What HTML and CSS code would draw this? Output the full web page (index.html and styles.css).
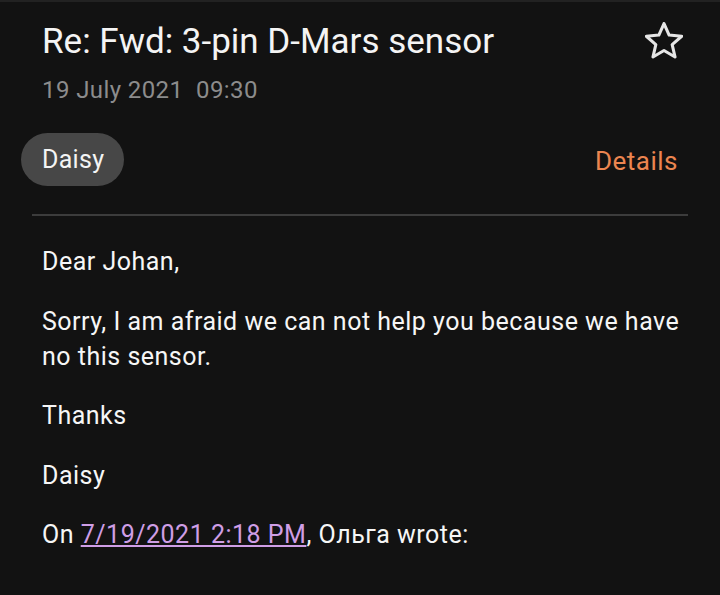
FILE: index.html
```
<!DOCTYPE html>
<html lang="en">
<head>
<meta charset="utf-8">
<link rel="stylesheet" href="styles.css">
</head>
<body>
<div class="screen">
  <header class="head">
    <div class="head-text">
      <h1 class="subject">Re: Fwd: 3-pin D-Mars sensor</h1>
      <div class="date">19 July 2021&nbsp;&nbsp;09:30</div>
    </div>
    <svg class="star" viewBox="2 2 20 20" width="38" height="38" aria-hidden="true">
      <path d="M12 2.8l2.7 6.1 6.6.6-5 4.4 1.5 6.5L12 17l-5.8 3.4 1.5-6.5-5-4.4 6.6-.6z" fill="none" stroke="#e6e6e6" stroke-width="1.6" stroke-linejoin="round"/>
    </svg>
  </header>
  <div class="sender-row">
    <span class="chip">Daisy</span>
    <span class="details">Details</span>
  </div>
  <hr class="divider">
  <div class="body">
    <p>Dear Johan,</p>
    <p>Sorry, I am afraid we can not help you because we have no this sensor.</p>
    <p>Thanks</p>
    <p>Daisy</p>
    <p>On <a class="link" href="#">7/19/2021 2:18 PM</a>, Ольга wrote:</p>
  </div>
</div>
</body>
</html>
```
FILE: styles.css
```
html, body {
  margin: 0;
  padding: 0;
  background: #121212;
}
.screen {
  width: 720px;
  height: 595px;
  box-sizing: border-box;
  border-top: 2px solid #222222;
  background: #121212;
  font-family: Roboto, "Noto Sans", sans-serif;
  color: #f2f2f2;
  overflow: hidden;
}
.head {
  display: flex;
  justify-content: space-between;
  align-items: flex-start;
  padding: 19px 37px 0 42px;
}
.subject {
  margin: 0;
  font-size: 35px;
  font-weight: 400;
  line-height: 42px;
  color: #f4f4f4;
}
.date {
  margin-top: 12px;
  font-size: 24px;
  letter-spacing: 0.4px;
  line-height: 30px;
  color: #8c8c8c;
}
.star {
  margin-top: 1px;
}
.sender-row {
  display: flex;
  justify-content: space-between;
  align-items: center;
  padding: 0 42px 0 21px;
  margin-top: 28px;
}
.chip {
  display: inline-flex;
  align-items: center;
  height: 53px;
  padding: 0 20px 0 21px;
  border-radius: 27px;
  background: #474747;
  font-size: 25px;
  letter-spacing: 0.3px;
  color: #f4f4f4;
}
.details {
  padding-top: 3px;
  font-size: 26px;
  letter-spacing: 0.5px;
  color: #ec8550;
}
.divider {
  margin: 28px 32px 0 32px;
  border: 0;
  height: 2px;
  background: #3c3c3c;
}
.body {
  padding: 28px 36px 0 42px;
  font-size: 25px;
  letter-spacing: 0.5px;
  line-height: 35px;
  color: #f6f6f6;
}
.body p {
  margin: 0 0 24.5px 0;
}
.link {
  color: #cf9ee6;
  text-decoration: underline;
}
```
